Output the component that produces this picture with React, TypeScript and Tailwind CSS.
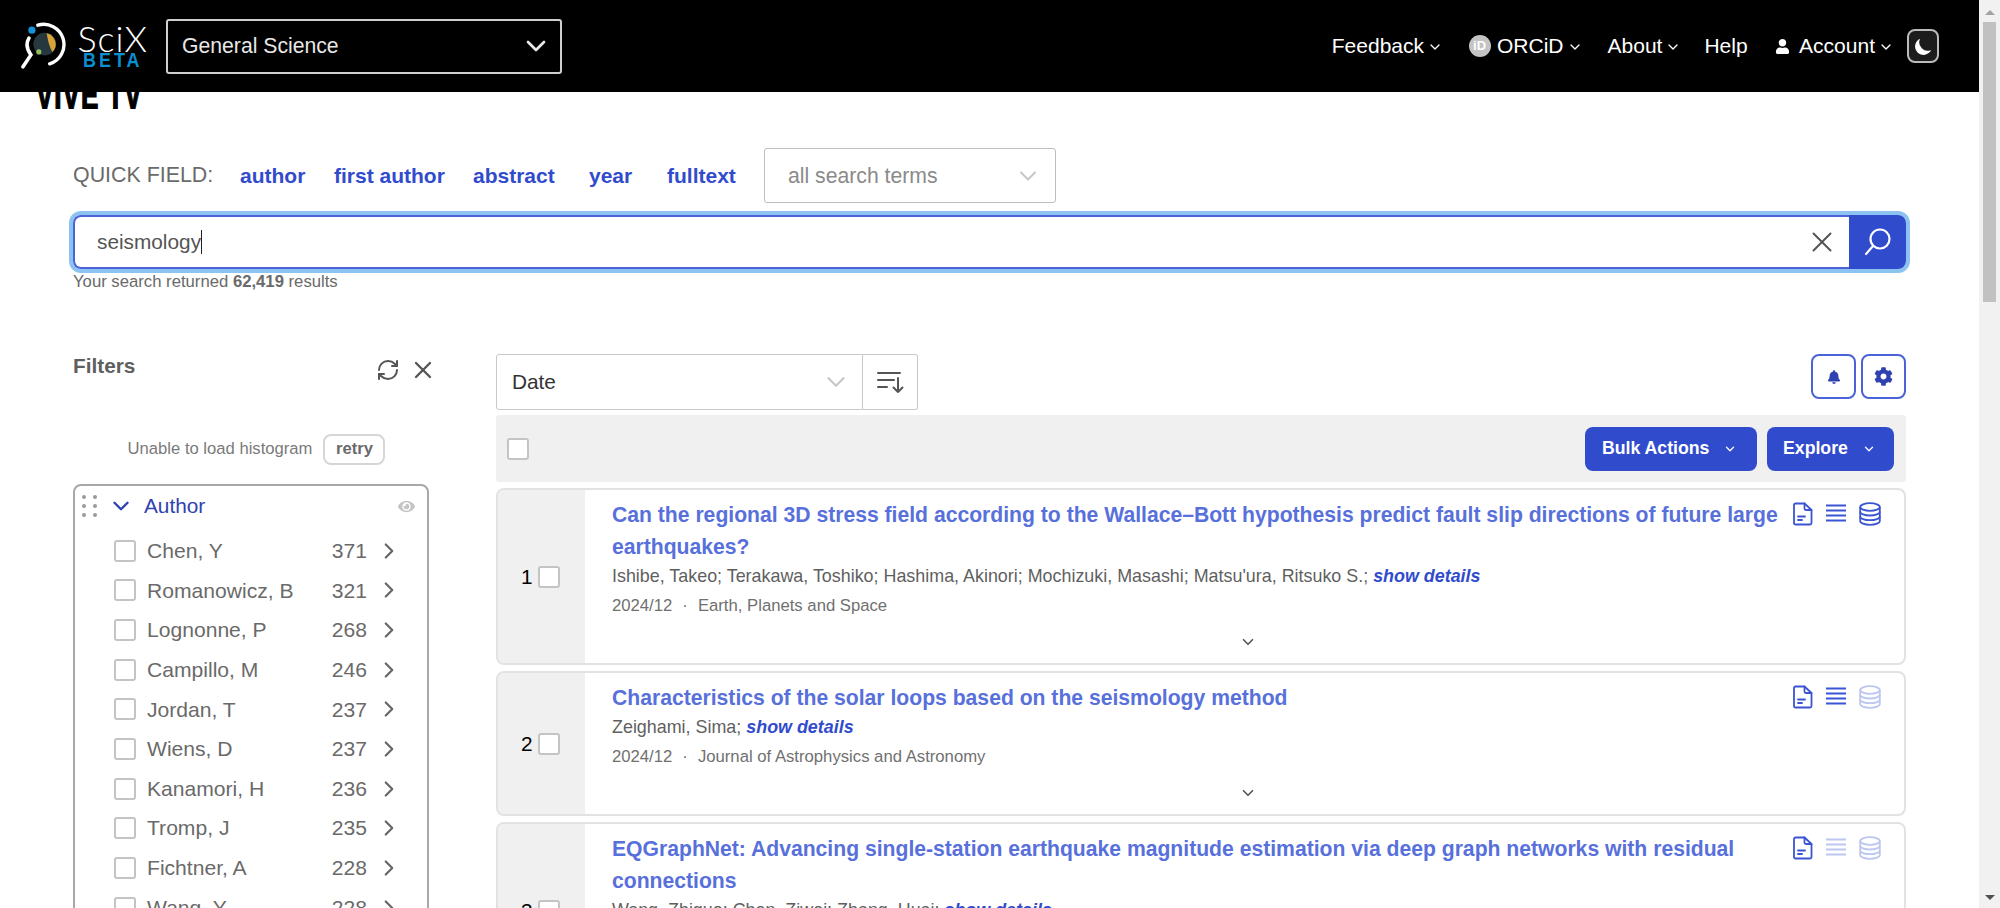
import React from 'react';
import { ChevronDown, ChevronRight, RefreshCw, X } from 'lucide-react';
import { FaBell, FaCog, FaEye, FaUser } from 'react-icons/fa';
import { HiMoon } from 'react-icons/hi';

const authors = [
  { name: 'Chen, Y', count: 371 },
  { name: 'Romanowicz, B', count: 321 },
  { name: 'Lognonne, P', count: 268 },
  { name: 'Campillo, M', count: 246 },
  { name: 'Jordan, T', count: 237 },
  { name: 'Wiens, D', count: 237 },
  { name: 'Kanamori, H', count: 236 },
  { name: 'Tromp, J', count: 235 },
  { name: 'Fichtner, A', count: 228 },
  { name: 'Wang, Y', count: 228 },
];

const results = [
  {
    title: 'Can the regional 3D stress field according to the Wallace–Bott hypothesis predict fault slip directions of future large earthquakes?',
    authors: 'Ishibe, Takeo; Terakawa, Toshiko; Hashima, Akinori; Mochizuki, Masashi; Matsu\'ura, Ritsuko S.;',
    journal: 'Earth, Planets and Space',
    list: true,
    data: true,
  },
  {
    title: 'Characteristics of the solar loops based on the seismology method',
    authors: 'Zeighami, Sima;',
    journal: 'Journal of Astrophysics and Astronomy',
    list: true,
    data: false,
  },
  {
    title: 'EQGraphNet: Advancing single-station earthquake magnitude estimation via deep graph networks with residual connections',
    authors: 'Wang, Zhiguo; Chen, Ziwei; Zhang, Huai;',
    journal: 'Journal of Geophysical Research',
    list: false,
    data: false,
  },
];

const Logo = () => (
  <div className="flex items-center w-[127px] ml-[21px] flex-none">
    <svg width="48" height="50" viewBox="0 0 48 50" fill="none">
      <circle cx="11" cy="9" r="3.6" fill="#1593d6" />
      <path d="M17 4 A20 20 0 0 1 29 43" stroke="#fff" strokeWidth="3.4" strokeLinecap="round" />
      <path d="M8 17 C4 24 7 30 10 34 L2 46" stroke="#fff" strokeWidth="3.6" strokeLinecap="round" />
      <circle cx="24" cy="23" r="11.5" fill="#26383d" />
      <path d="M26 12 A11.5 11.5 0 0 1 32 31 C29 27 27 19 26 12Z" fill="#d9a437" />
      <circle cx="18" cy="31" r="2.6" fill="#8fbf5a" />
    </svg>
    <div className="ml-[9px] flex flex-col items-center">
      <span className="font-['Lato'] font-light text-[36px] leading-[29px] text-white tracking-[1px]">SciX</span>
      <span className="font-['Liberation_Sans'] font-bold text-[18px] leading-[15px] text-[#0a8fd0] tracking-[3px] scale-y-110">BETA</span>
    </div>
  </div>
);

const NavItem = ({ label, chevron = true }: { label: string; chevron?: boolean }) => (
  <button className="flex items-center text-white text-[21px]">
    {label}
    {chevron && <ChevronDown size={16} strokeWidth={2} className="ml-[3px] mt-[2px]" />}
  </button>
);

const Box = ({ className = '' }: { className?: string }) => (
  <div className={`w-[22px] h-[22px] flex-none border-2 border-[#c4c4c4] rounded-[3px] bg-white ${className}`} />
);

const FileIcon = () => (
  <svg width="20" height="24" viewBox="0 0 20 24" fill="none" stroke="#3a54d2" strokeWidth="1.8" strokeLinejoin="round" strokeLinecap="round">
    <path d="M2.5 1.5 H11.5 L18.5 8 V21 a1.5 1.5 0 0 1 -1.5 1.5 H2.5 a1.5 1.5 0 0 1 -1.5 -1.5 V3 a1.5 1.5 0 0 1 1.5 -1.5Z" />
    <path d="M11.5 1.5 V6.5 a1.5 1.5 0 0 0 1.5 1.5 H18.5" />
    <path d="M5 14.5 H12" />
    <path d="M5 18 H9" />
  </svg>
);

const ListIcon = ({ on }: { on: boolean }) => (
  <svg width="22" height="20" viewBox="0 0 22 20" fill="none" stroke={on ? '#3a54d2' : '#bcc6f0'} strokeWidth="2" className="mt-[1px]">
    <path d="M1 2.5 H21" />
    <path d="M1 7.5 H21" />
    <path d="M1 12.5 H21" />
    <path d="M1 17.5 H21" />
  </svg>
);

const DataIcon = ({ on }: { on: boolean }) => (
  <svg width="22" height="24" viewBox="0 0 22 24" fill="none" stroke={on ? '#3a54d2' : '#bcc6f0'} strokeWidth="1.8">
    <ellipse cx="11" cy="5" rx="9.8" ry="3.8" />
    <path d="M1.2 5 V19 C1.2 21 5.5 22.8 11 22.8 C16.5 22.8 20.8 21 20.8 19 V5" />
    <path d="M1.2 9.7 C1.2 11.7 5.5 13.5 11 13.5 C16.5 13.5 20.8 11.7 20.8 9.7" />
    <path d="M1.2 14.4 C1.2 16.4 5.5 18.2 11 18.2 C16.5 18.2 20.8 16.4 20.8 14.4" />
  </svg>
);

const ResultCard = ({ index, item }: { index: number; item: (typeof results)[number] }) => (
  <div className="flex flex-none border-2 border-[#e2e2e2] rounded-[8px] overflow-hidden bg-white">
    <div className="w-[87px] flex-none bg-[#f0f0f0] flex items-center pl-[23px] gap-[6px]">
      <span className="text-[20.8px] text-black w-[11px]">{index}</span>
      <Box />
    </div>
    <div className="flex-1 min-w-0 pl-[27px] pr-[23px] pt-[9px] pb-[10px]">
      <div className="flex justify-between gap-[12px]">
        <h3 className="flex-1 font-bold text-[21.15px] leading-[32px] text-[#5870db]">{item.title}</h3>
        <div className="flex flex-none gap-[12px] mt-[3px] h-[24px]">
          <FileIcon />
          <ListIcon on={item.list} />
          <DataIcon on={item.data} />
        </div>
      </div>
      <p className="text-[17.9px] leading-[27px] text-[#5f5f5f]">
        {item.authors} <a className="font-bold italic text-[#314bcd]">show details</a>
      </p>
      <p className="mt-[4px] text-[16.7px] leading-[24px] text-[#707070]">
        2024/12<span className="mx-[10px]">·</span>{item.journal}
      </p>
      <div className="mt-[11px] h-[24px] flex justify-center text-[#555]">
        <ChevronDown size={18} strokeWidth={2.2} className="mt-[4px] ml-[2px]" />
      </div>
    </div>
  </div>
);

export default function App() {
  return (
    <div className="flex h-screen overflow-hidden bg-white font-['Liberation_Sans',Arial,sans-serif]">
      <div className="flex-1 min-w-0 flex flex-col">
        {/* Top bar */}
        <header className="h-[92px] flex-none bg-black flex items-center">
          <Logo />
          <button className="w-[396px] h-[55px] ml-[18px] flex items-center justify-between pl-[14px] pr-[8px] border-2 border-[#cfcfcf] rounded-[3px] text-[21.2px] text-[#e8e8e8]">
            General Science
            <ChevronDown size={32} strokeWidth={2} />
          </button>
          <nav className="ml-auto mr-[40px] flex items-center">
            <NavItem label="Feedback" />
            <div className="ml-[25.5px] flex items-center">
              <span className="w-[22px] h-[22px] rounded-full bg-[#c4c4c4] text-white text-[13px] font-bold flex items-center justify-center mr-[6.5px]">iD</span>
              <NavItem label="ORCiD" />
            </div>
            <div className="ml-[25px]"><NavItem label="About" /></div>
            <div className="ml-[23px]"><NavItem label="Help" chevron={false} /></div>
            <FaUser size={15} className="ml-[27.5px] mr-[9px] text-white" />
            <NavItem label="Account" />
            <button className="ml-[13px] w-[32px] h-[34px] rounded-[8px] border-2 border-[#bbb] bg-[#1c1c1c] flex items-center justify-center">
              <HiMoon size={21} className="text-white" />
            </button>
          </nav>
        </header>

        {/* Page heading scrolled under the top bar */}
        <div className="h-[17px] flex-none overflow-hidden pl-[36px] flex items-end">
          <span className="font-bold text-[26px] leading-[17px] text-black tracking-[1px] whitespace-nowrap origin-bottom scale-y-[1.6] [-webkit-text-stroke:1px_black]">VIVE TV</span>
        </div>

        <div className="px-[73px]">
          {/* Quick fields */}
          <div className="mt-[39px] h-[55px] flex items-center text-[21px]">
            <span className="text-[#6a6a6a] text-[21.4px] w-[167px]">QUICK FIELD:</span>
            <a className="font-bold text-[#314bcd] w-[94px]">author</a>
            <a className="font-bold text-[#314bcd] w-[139px]">first author</a>
            <a className="font-bold text-[#314bcd] w-[116px]">abstract</a>
            <a className="font-bold text-[#314bcd] w-[78px]">year</a>
            <a className="font-bold text-[#314bcd] w-[97px]">fulltext</a>
            <div className="w-[292px] h-[55px] border border-[#bdbdbd] rounded-[3px] flex items-center justify-between pl-[23px] pr-[13px] text-[21.2px] text-[#8a8a8a]">
              all search terms
              <ChevronDown size={28} strokeWidth={1.8} className="text-[#c8c8c8]" />
            </div>
          </div>

          {/* Search box */}
          <div className="mt-[12px] h-[54px] flex rounded-[8px] shadow-[0_0_0_4px_#8cc3f0]">
            <div className="flex-1 flex items-center border-2 border-r-0 border-[#4a63d6] rounded-l-[8px] pl-[22px] pr-[10px] bg-white">
              <span className="text-[20.8px] text-[#555]">seismology</span>
              <span className="w-[1px] h-[24px] bg-[#222]" />
              <X size={34} strokeWidth={1.4} className="ml-auto text-[#555]" />
            </div>
            <button className="w-[57px] flex-none bg-[#314bcd] rounded-r-[8px] flex items-center justify-center">
              <svg width="30" height="30" viewBox="0 0 30 30" fill="none" stroke="#fff" strokeWidth="2.2" strokeLinecap="round">
                <circle cx="17" cy="12" r="9.5" />
                <path d="M10 19 L3 27" />
              </svg>
            </button>
          </div>
          <p className="mt-[3px] text-[16.7px] leading-[20px] text-[#6a6a6a]">
            Your search returned <b>62,419</b> results
          </p>

          <div className="mt-[62px] flex">
            {/* Filters */}
            <aside className="w-[356px] flex-none">
              <div className="flex justify-between h-[80px]">
                <h2 className="font-bold text-[20.8px] leading-[24px] text-[#5f5f5f]">Filters</h2>
                <div className="flex items-center gap-[9px] h-[24px] mt-[4px] mr-[-8px] text-[#555]">
                  <RefreshCw size={24} strokeWidth={2} />
                  <X size={28} strokeWidth={2} />
                </div>
              </div>
              <div className="flex items-center justify-center gap-[11px] pl-[11px]">
                <span className="text-[16.64px] text-[#7a7a7a]">Unable to load histogram</span>
                <button className="w-[62px] h-[31px] border-2 border-[#d6d6d6] rounded-[8px] font-bold text-[16.64px] text-[#6a6a6a]">retry</button>
              </div>
              <div className="mt-[19px] border-2 border-[#a8a8a8] rounded-[8px] pb-[8px]">
                <div className="h-[40px] flex items-center pl-[7px] pr-[12px]">
                  <div className="grid grid-cols-2 gap-x-[7px] gap-y-[5px]">
                    {[0, 1, 2, 3, 4, 5].map((i) => (
                      <span key={i} className="w-[4px] h-[4px] rounded-full bg-[#9a9a9a]" />
                    ))}
                  </div>
                  <ChevronDown size={26} strokeWidth={2.2} className="ml-[11px] text-[#2f42b0]" />
                  <span className="ml-[10px] text-[20.8px] text-[#2f42b0]">Author</span>
                  <FaEye size={17} className="ml-auto text-[#c4c4c4]" />
                </div>
                <ul className="mt-[5px]">
                  {authors.map((a) => (
                    <li key={a.name} className="h-[39.65px] flex items-center pl-[39px] text-[21.1px] text-[#6a6a6a]">
                      <Box />
                      <span className="ml-[11px] flex-1">{a.name}</span>
                      <span className="w-[60px] text-right">{a.count}</span>
                      <ChevronRight size={26} strokeWidth={2} className="ml-[9px] mr-[25px] text-[#666]" />
                    </li>
                  ))}
                </ul>
              </div>
            </aside>

            {/* Results */}
            <section className="ml-[67px] flex-1 min-w-0 flex flex-col">
              <div className="h-[56px] flex-none flex justify-between items-start">
                <div className="flex h-[56px]">
                  <div className="w-[367px] border border-[#c8c8c8] rounded-l-[3px] flex items-center justify-between pl-[15px] pr-[11px] text-[20.8px] text-[#333]">
                    Date
                    <ChevronDown size={30} strokeWidth={1.8} className="text-[#c8c8c8]" />
                  </div>
                  <button className="w-[55px] border border-l-0 border-[#c8c8c8] rounded-r-[3px] flex items-center justify-center">
                    <svg width="28" height="26" viewBox="0 0 28 26" fill="none" stroke="#555" strokeWidth="2" strokeLinecap="round" strokeLinejoin="round">
                      <path d="M2 4 H24" />
                      <path d="M2 11 H18" />
                      <path d="M2 18 H11" />
                      <path d="M22 9 V23 M17.5 18.5 L22 23 L26.5 18.5" />
                    </svg>
                  </button>
                </div>
                <div className="flex gap-[5px]">
                  <button className="w-[45px] h-[45px] border-2 border-[#4a63d6] rounded-[8px] flex items-center justify-center text-[#2f42b0]">
                    <FaBell size={14} />
                  </button>
                  <button className="w-[45px] h-[45px] border-2 border-[#4a63d6] rounded-[8px] flex items-center justify-center text-[#2f42b0]">
                    <FaCog size={19} />
                  </button>
                </div>
              </div>

              <div className="mt-[5px] h-[67px] flex-none bg-[#f0f0f0] rounded-[3px] flex items-center pl-[11px] pr-[12px]">
                <Box />
                <button className="ml-auto w-[172px] h-[44px] bg-[#314bcd] rounded-[8px] flex items-center justify-between pl-[17px] pr-[20px] text-white font-bold text-[17.7px]">
                  Bulk Actions
                  <ChevronDown size={14} strokeWidth={2.2} />
                </button>
                <button className="ml-[10px] w-[127px] h-[44px] bg-[#314bcd] rounded-[8px] flex items-center justify-between pl-[16px] pr-[18px] text-white font-bold text-[17.7px]">
                  Explore
                  <ChevronDown size={14} strokeWidth={2.2} />
                </button>
              </div>

              <div className="mt-[6px] flex flex-col gap-[6px]">
                {results.map((r, i) => (
                  <ResultCard key={i} index={i + 1} item={r} />
                ))}
              </div>
            </section>
          </div>
        </div>
      </div>

      {/* Scrollbar */}
      <div className="w-[21px] flex-none bg-[#f1f1f1] flex flex-col items-center">
        <div className="mt-[10px] w-0 h-0 border-x-[5px] border-x-transparent border-b-[5px] border-b-[#a3a3a3]" />
        <div className="mt-[7px] w-[13px] h-[280px] bg-[#c1c1c1]" />
        <div className="mt-auto mb-[8px] w-0 h-0 border-x-[5px] border-x-transparent border-t-[5px] border-t-[#505050]" />
      </div>
    </div>
  );
}
